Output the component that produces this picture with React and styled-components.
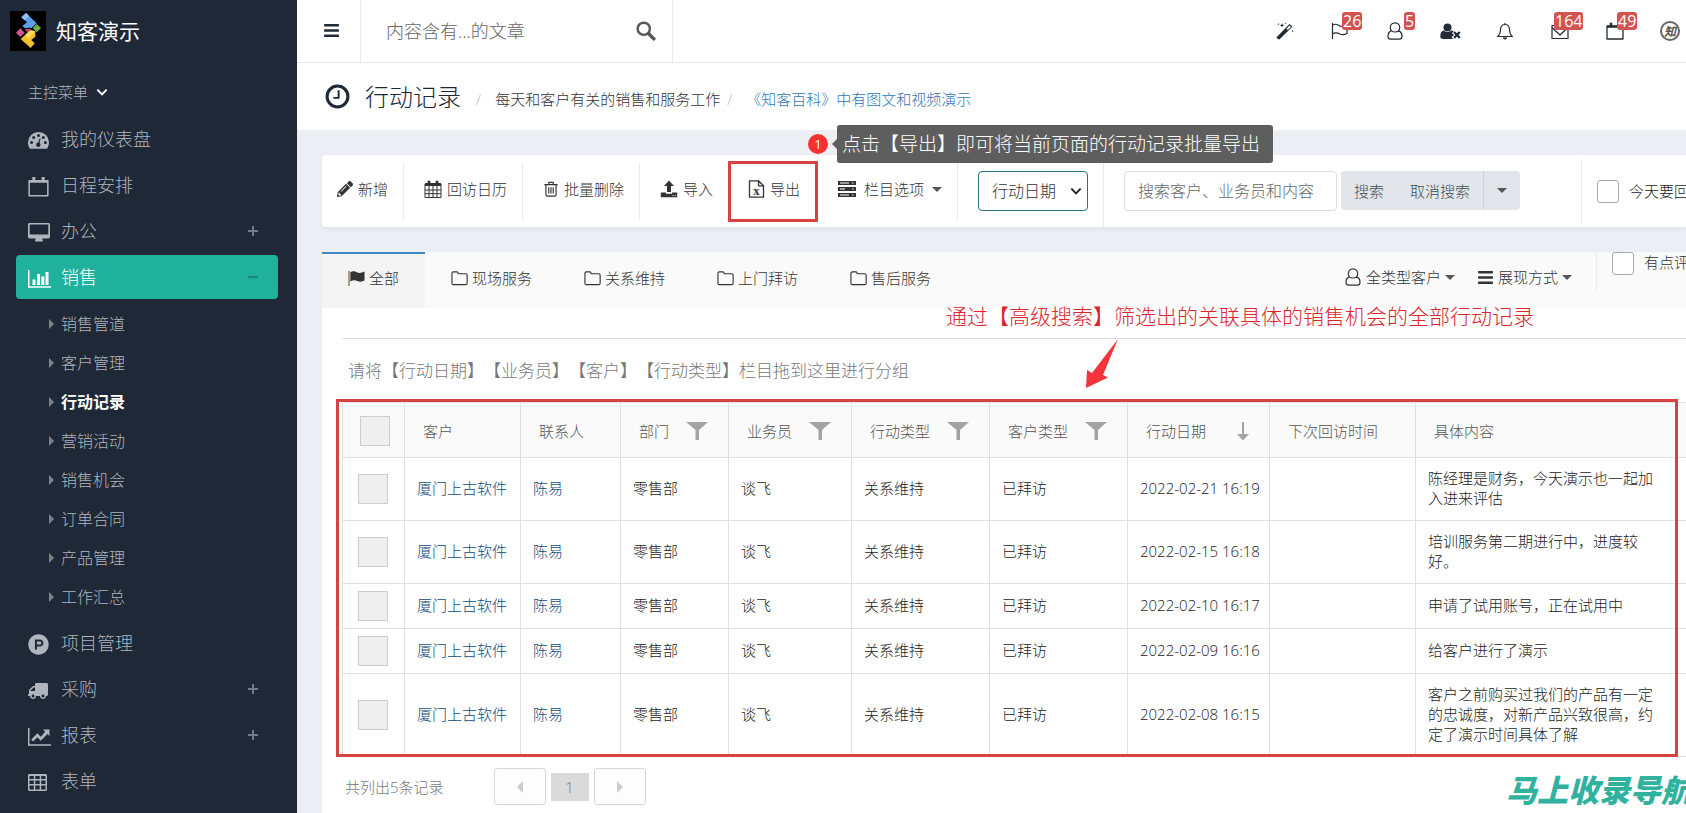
import React, { useState } from 'react';
import styled, { createGlobalStyle, css } from 'styled-components';
import { FaBars, FaPencilAlt, FaProductHunt, FaTruck } from 'react-icons/fa';

const GlobalStyle = createGlobalStyle`
  * {
    box-sizing: border-box;
  }
  body {
    margin: 0;
    background: #ebeef3;
    color: #222;
    font-family: "Open Sans", "Noto Sans CJK SC", sans-serif;
    font-size: 15px;
    font-weight: 300;
    line-height: 20px;
    text-spacing-trim: space-all;
  }
  button, input, select {
    font: inherit;
    color: inherit;
    margin: 0;
  }
  button {
    padding: 0;
    border: none;
    background: none;
    cursor: pointer;
  }
  a {
    color: inherit;
    text-decoration: none;
  }
  svg {
    display: block;
    flex: none;
  }
`;

/* ---------- icons ---------- */

const Line = ({ size = 18, width = 1, children }) => (
  <svg
    width={size}
    height={size}
    viewBox="0 0 18 18"
    fill="none"
    stroke="currentColor"
    strokeWidth={width}
    strokeLinejoin="round"
  >
    {children}
  </svg>
);

const Wand = () => (
  <Line width={0}>
    <path
      fill="currentColor"
      fillRule="evenodd"
      d="M.8 15L13 2.600c.4-.4.800-.4 1.200 0l1.700 1.500c.4.400.4.800 0 1.200L3.600 17.200c-.3.300-.7.300-1 0L.800 16.200c-.3-.4-.3-.8 0-1.200zM10.600 6.700l1.300 1.200 3-3-1.300-1.300z"
    />
    <path
      fill="currentColor"
      d="M6 1l.6 1.700 1.700.6-1.700.6L6 5.600l-.6-1.700-1.700-.6 1.700-.6zM2.500 1l.3.800.8.300-.8.300-.3.800-.3-.8-.8-.3.800-.3zM9.500.5l.3.700.7.300-.7.300-.3.700-.3-.7-.7-.3.700-.3zM16.500 8l.3.800.8.300-.8.300-.3.800-.3-.8-.8-.3.800-.3z"
    />
  </Line>
);

const FlagLine = () => (
  <Line width={1.2}>
    <path d="M1.500 1v16M2 3c3-2 5 0 7 1s4 1 7-.5v8c-3 1.500-5 1.500-7 .5s-4-2-7-.5" />
  </Line>
);

const UserLine = () => (
  <Line width={1.2}>
    <path d="M9 .8c2.900 0 4.700 2 4.700 4.600S11.900 10 9 10 4.300 8 4.300 5.400 6.100.8 9 .8zM5.600 8.600C3 9.600 2 11.500 2 14.200c0 2 1 2.900 2.700 2.900h8.600c1.700 0 2.700-.9 2.700-2.900 0-2.700-1-4.600-3.600-5.600" />
  </Line>
);

const UserTimes = () => (
  <svg width="21" height="17" viewBox="0 0 21 17" fill="currentColor">
    <circle cx="7.500" cy="4.500" r="4" />
    <path d="M3.600 7.600c1 .9 2.300 1.500 3.900 1.500s2.900-.6 3.900-1.500c1 .1 1.700.4 2.300.9l-1.700 1.600 1.900 1.900-2.300 2.300 1.700 1.700H2.800C1.200 16 .3 15.100.3 13.500c0-3 .9-5.500 3.300-5.900z" />
    <path d="M13.300 9.800l1.600-1.600 2 2 2-2 1.700 1.600-2.100 2.100 2.100 2.100-1.700 1.700-2-2.100-2 2.100-1.600-1.700 2-2.100z" />
  </svg>
);

const BellLine = () => (
  <Line width={1.2}>
    <path d="M9 1v1.500M9 2.500c3 0 4.400 2.200 4.500 5 .1 3.500.8 5.500 3 7h-15c2.200-1.500 2.900-3.500 3-7 .1-2.800 1.500-5 4.500-5z" />
    <path d="M7.500 15.500c.3 1.500 2.700 1.500 3 0" strokeWidth="1.600" />
  </Line>
);

const MailLine = () => (
  <Line width={1.2}>
    <path d="M1 3.500h16v13H1zM1 5.500l8 7.500 8-7.500" />
  </Line>
);

const CalendarLine = ({ size }) => (
  <Line size={size} width={1.3}>
    <path d="M1 4h16v13H1z" />
    <path d="M1 4.800h16" strokeWidth="2" />
    <path d="M5 .8v4M13 .8v4" strokeWidth="2.600" />
  </Line>
);

const CalendarGrid = () => (
  <Line width={1}>
    <path d="M1 4h16v13.500H1zM5 6v11M9 6v11M13 6v11M1 10h16M1 13.700h16" />
    <path d="M1 4.500h16" strokeWidth="3" />
    <path d="M5 .8v3.500M13 .8v3.500" strokeWidth="2.800" />
  </Line>
);

const TrashLine = () => (
  <Line width={1.3} size={16}>
    <path d="M1.500 4h15M6.500 4V1.500h5V4M3.300 4v11.500c0 1 .5 1.500 1.500 1.500h8.400c1 0 1.500-.5 1.500-1.500V4M6.500 7v7M9 7v7M11.500 7v7" />
  </Line>
);

const Upload = () => (
  <Line width={0}>
    <path fill="currentColor" d="M9 .5l5 5.500h-3v6H7V6H4zM.8 12.500H6v1.200h6v-1.200h5.200v4.800H.8z" />
    <path fill="#fff" d="M12.500 15h1v1h-1zM14.800 15h1v1h-1z" />
  </Line>
);

const ExcelFile = () => (
  <svg width="17" height="18" viewBox="0 0 17 18">
    <path
      d="M1.500.8h9l5 5v11.400h-14zM10.500.8v5h5"
      fill="none"
      stroke="currentColor"
      strokeWidth="1.300"
      strokeLinejoin="round"
    />
    <text
      x="8.500"
      y="14.500"
      fill="currentColor"
      fontFamily="Liberation Serif, serif"
      fontSize="13"
      fontWeight="700"
      textAnchor="middle"
    >
      x
    </text>
  </svg>
);

const ServerIcon = () => (
  <Line width={0}>
    <path fill="currentColor" d="M0 1h18v4H0zM0 7h18v4H0zM0 13h18v4H0z" />
    <path fill="#fff" d="M2 2.600h9v.8H2zM2 8.600h5v.8H2zM2 14.600h9v.8H2zM14 2.500h1.500v1H14zM14 8.500h1.500v1H14zM14 14.500h1.500v1H14z" />
  </Line>
);

const FolderLine = () => (
  <Line width={1.2} size={17}>
    <path d="M1 3.500C1 2.500 1.500 2 2.500 2h3.700C7.200 2 7.500 2.500 7.600 4h8c1 0 1.500.5 1.500 1.500V14c0 1-.5 1.500-1.500 1.500H2.500C1.500 15.500 1 15 1 14z" />
  </Line>
);

const FlagSolid = () => (
  <Line size={17} width={0}>
    <path fill="#8a7a62" d="M.3 1h1.500v16H.3z" />
    <path fill="currentColor" d="M2.500 2.500c3-2 5-1 7 0s5 .8 8-.8v9.500c-3 1.500-5 1.500-7.500.5s-4.500-1.200-7.500.5z" />
  </Line>
);

const ClockLine = () => (
  <Line size={25} width={2.2}>
    <circle cx="9" cy="9" r="7.500" />
    <path d="M9.800 4.500v5.500H6" strokeWidth="1.400" />
  </Line>
);

const SearchIcon = () => (
  <Line size={20} width={2.2}>
    <circle cx="7" cy="7" r="5.500" />
    <path d="M11 11l6 6" strokeWidth="3" />
  </Line>
);

const ChevronDown = ({ size = 12 }) => (
  <Line size={size} width={3}>
    <path d="M2 5.500l7 7 7-7" strokeLinejoin="miter" />
  </Line>
);

const Dashboard = () => (
  <svg width="21" height="17" viewBox="0 0 21 17">
    <path fill="currentColor" d="M10.500 0A10.500 10.500 0 0 0 0 10.500c0 2.200.6 4 1.700 5.700.2.400.6.600 1 .6h15.600c.4 0 .8-.2 1-.6 1-1.700 1.700-3.500 1.700-5.700A10.500 10.500 0 0 0 10.500 0z" />
    <g fill="#1e2837">
      <circle cx="3.600" cy="10.500" r="1.500" />
      <circle cx="5.700" cy="5.600" r="1.500" />
      <circle cx="10.500" cy="3.400" r="1.500" />
      <circle cx="15.300" cy="5.600" r="1.500" />
      <circle cx="17.400" cy="10.500" r="1.500" />
      <circle cx="10.300" cy="12.800" r="2.200" />
      <path d="M11.500 6.500l1.200.3-1.600 5.500-1.300-.3z" />
    </g>
  </svg>
);

const Desktop = () => (
  <svg width="22" height="19" viewBox="0 0 22 19" fill="currentColor">
    <path
      fillRule="evenodd"
      d="M1.700 0h18.600c1 0 1.700.7 1.700 1.700v12.100c0 1-.7 1.700-1.700 1.700h-6.100c.1 1.100.8 1.600.8 2.200 0 .5-.3.800-.8.800H7.800c-.5 0-.8-.3-.8-.8 0-.6.700-1.100.8-2.200H1.700c-1 0-1.700-.7-1.700-1.700V1.700C0 .7.700 0 1.700 0zm0 1.500v10h18.600v-10z"
    />
  </svg>
);

const BarChart = () => (
  <svg width="23" height="18" viewBox="0 0 23 18" fill="currentColor">
    <path d="M0 0h1.500v16.200H23v1.500H0zM4.500 9.500h3V15h-3zM9 4h3v11H9zM13.300 6.500h3V15h-3zM17.500 2h3v13h-3z" />
  </svg>
);

const LineChart = () => (
  <svg width="23" height="18" viewBox="0 0 23 18" fill="currentColor">
    <path d="M0 0h1.500v16.200H23v1.500H0zM15 1.500h6.500V8l-2-2-6.700 6.700-3.400-3.400-4.200 4.200-2-2L9.400 5.300l3.400 3.400 4.300-4.900z" />
  </svg>
);

const GridIcon = () => (
  <svg width="19" height="17" viewBox="0 0 19 17">
    <path fillRule="evenodd" fill="currentColor" d="M1.500 0h16c.9 0 1.500.6 1.500 1.500v14c0 .9-.6 1.500-1.500 1.500h-16C.6 17 0 16.400 0 15.500v-14C0 .6.600 0 1.500 0zM1.500 2v3h4.300V2zm5.800 0v3h4.400V2zm5.900 0v3h4.300V2zM1.500 6.500v3.500h4.300V6.500zm5.800 0v3.500h4.400V6.500zm5.900 0v3.500h4.300V6.500zM1.500 11.500v4h4.300v-4zm5.800 0v4h4.400v-4zm5.900 0v4h4.300v-4z" />
  </svg>
);

const Funnel = () => (
  <svg width="22" height="18" viewBox="0 0 22 18" fill="#a3a3a3">
    <path d="M0 0h22l-9 8v10h-3.500V8z" />
  </svg>
);

const SortDown = () => (
  <svg width="12" height="19" viewBox="0 0 12 19" fill="#a3a3a3">
    <path d="M5 0h2v12h5l-6 6.500L0 12h5z" />
  </svg>
);

const Logo = () => (
  <svg width="36" height="40" viewBox="0 0 108 120">
    <path fill="#000" d="M0 0h108v120H0z" />
    <path fill="#5b9ee6" d="M34 19L48 6l32 31-15 14-9-1-11 2-8-7 14-11z" />
    <path fill="#8fc0f2" d="M34 19L48 6l10 10-14 12z" />
    <path fill="#6cb33f" d="M80 39l13 12-13 13-12-13z" />
    <path fill="#d2568f" d="M31 52l13 13-13 13-13-13z" />
    <path fill="#b8497c" d="M44 54h20l-10 13z" />
    <path fill="#f3c12c" d="M62 58l14 3v16l-12 10 10 10-12 14-30-27 14-13z" />
    <path fill="#f9dd55" d="M62 58l14 3-22 22-8-12z" />
  </svg>
);

/* ---------- sidebar ---------- */

const Layout = styled.div`
  display: flex;
  min-height: 100vh;
  overflow: hidden;
`;

const Sidebar = styled.aside`
  flex: none;
  width: 297px;
  background: #1e2837;
  color: #b0b5bd;
`;

const Brand = styled.div`
  display: flex;
  align-items: center;
  gap: 10px;
  height: 62px;
  padding-left: 10px;
  color: #fff;
  font-size: 21px;
  font-weight: 400;
`;

const MenuTitle = styled.button`
  display: flex;
  align-items: center;
  gap: 8px;
  height: 55px;
  margin-left: 28px;
  padding-top: 4px;
  color: #b0b5bd;

  svg {
    color: #fff;
  }
`;

const Menu = styled.ul`
  display: flex;
  flex-direction: column;
  gap: 2px;
  margin: 0;
  padding: 0 19px 4px 16px;
  list-style: none;
`;

const MenuLink = styled.a`
  display: grid;
  grid-template-columns: 33px 1fr 10px;
  align-items: center;
  height: 44px;
  padding: 0 20px 0 12px;
  border-radius: 4px;
  font-size: 18px;

  > svg {
    margin-top: 3px;
  }

  ${(p) =>
    p.$open &&
    css`
      background: #1fb19b;
      color: #fff;
    `}
`;

const Toggle = styled.span`
  position: relative;
  height: 10px;
  color: ${(p) => (p.$open ? '#17877b' : '#707985')};

  &::before,
  &::after {
    content: '';
    position: absolute;
    background: currentColor;
  }
  &::before {
    inset: 4px 0;
  }
  &::after {
    inset: 0 4px;
    display: ${(p) => (p.$open ? 'none' : 'block')};
  }
`;

const SubMenu = styled.ul`
  margin: 0;
  padding: 5px 0 3px 33px;
  list-style: none;
`;

const SubLink = styled.a`
  display: flex;
  align-items: center;
  gap: 7px;
  height: 39px;
  font-size: 16px;
  color: ${(p) => (p.$active ? '#fff' : '#b0b5bd')};
  font-weight: ${(p) => (p.$active ? 700 : 300)};

  &::before {
    content: '';
    border: 5px solid transparent;
    border-left-color: #7a828d;
    border-right: none;
  }
`;

const Flip = styled.span`
  display: flex;
  justify-content: flex-end;
  padding-top: 3px;
  transform: scaleX(-1);
`;

/* ---------- header ---------- */

const Main = styled.main`
  flex: 1;
  min-width: 0;
  display: flex;
  flex-direction: column;
`;

const TopBar = styled.header`
  display: flex;
  align-items: stretch;
  height: 63px;
  background: #fff;
  border-bottom: 1px solid #e7e8ec;
`;

const MenuButton = styled.button`
  width: 64px;
  padding: 0 0 1px 26px;
  border-right: 1px solid #e7e8ec;
  color: #222b36;
`;

const GlobalSearch = styled.form`
  display: flex;
  align-items: center;
  width: 312px;
  padding: 0 16px 0 25px;
  border-right: 1px solid #e7e8ec;
  color: #555;

  input {
    flex: 1;
    min-width: 0;
    padding: 0;
    border: none;
    outline: none;
    font-size: 18px;
  }
  input::placeholder {
    color: #666;
  }
`;

const Tools = styled.nav`
  display: flex;
  gap: 1px;
  margin-left: auto;
`;

const Tool = styled.button`
  position: relative;
  display: flex;
  align-items: center;
  justify-content: center;
  width: 54px;
  color: #222b36;
`;

const Badge = styled.span`
  position: absolute;
  top: 12px;
  left: ${(p) => [36, 29, 21][p.$digits - 1]}px;
  padding: 0 1px;
  border-radius: 3px;
  background: #d25352;
  color: #fff;
  font-size: 16px;
  font-weight: 400;
  line-height: 18px;
`;

const Avatar = styled.button`
  align-self: center;
  width: 20px;
  height: 20px;
  margin: 0 6px 0 17px;
  border: 2px solid #666;
  border-radius: 50%;
  color: #555;
  font-size: 12px;
  font-style: italic;
  font-weight: 700;
  line-height: 15px;
  overflow: hidden;
`;

const PageHead = styled.div`
  display: flex;
  align-items: center;
  height: 67px;
  padding: 0 28px;
  background: #fff;
  color: #1e2837;

  h1 {
    margin: 0 15px;
    font-size: 24px;
    font-weight: 300;
  }
`;

const Crumb = styled.span`
  padding-top: 4px;
  color: #333;

  &::before {
    content: '/';
    margin-right: 14px;
    color: #bbb;
  }
  & + & {
    margin-left: 7px;
  }
  a {
    color: #2f74b0;
  }
`;

/* ---------- toolbar ---------- */

const Content = styled.div`
  flex: 1;
  display: flex;
  flex-direction: column;
  gap: 25px;
  padding: 25px 0 0 25px;
`;

const Toolbar = styled.section`
  position: relative;
  display: flex;
  align-items: center;
  height: 72px;
  background: #fff;
  border-radius: 4px 0 0 4px;
  box-shadow: 0 2px 4px rgba(0, 0, 0, 0.05);
  white-space: nowrap;
`;

const Action = styled.button`
  display: flex;
  align-items: center;
  gap: ${(p) => p.$gap || 5}px;
  height: 57px;
  padding: 0 15px 4px 20px;
  border-right: 1px solid #e9eaed;
  color: #333;

  &:first-child {
    padding-left: 15px;
  }
`;

const ImportAction = styled(Action)`
  border-right: none;
`;

const ExportAction = styled(Action)`
  height: 61px;
  padding: 0 15px 4px 17px;
  border: 3px solid #d6423f;
`;

const Caret = styled.span`
  border: 5px solid transparent;
  border-top-color: #555;
  border-bottom: none;
`;

const DateField = styled.div`
  position: relative;
  display: flex;
  align-items: center;
  align-self: stretch;
  padding: 0 15px 0 20px;
  border-right: 1px solid #e9eaed;

  select {
    width: 110px;
    height: 40px;
    padding: 0 13px;
    border: 1px solid #2a7387;
    border-radius: 4px;
    background: #fff;
    color: #333;
    font-size: 16px;
    appearance: none;
  }
  svg {
    position: absolute;
    right: 21px;
    pointer-events: none;
  }
`;

const RecordSearch = styled.form`
  display: flex;
  gap: 4px;
  padding-left: 20px;

  input {
    width: 213px;
    height: 40px;
    padding: 0 13px;
    border: 1px solid #dcdfe3;
    border-radius: 4px;
    font-size: 16px;
  }
  input::placeholder {
    color: #666;
  }
`;

const ButtonGroup = styled.div`
  display: flex;
  height: 39px;
  border-radius: 4px;
  background: #e2e6ea;
  color: #3d4a5a;

  button {
    padding: 0 13px;
  }
  button:last-child {
    border-left: 1px solid #ccd1d6;
  }
`;

const Check = styled.label`
  display: flex;
  align-items: ${(p) => (p.$top ? 'flex-start' : 'center')};
  gap: 10px;
  flex: none;
  width: ${(p) => p.$width}px;
  height: ${(p) => (p.$top ? 38 : 64)}px;
  margin-left: ${(p) => (p.$top ? 0 : 'auto')};
  padding-left: 15px;
  border-left: 1px solid #e9eaed;
  overflow: hidden;
  white-space: nowrap;

  input {
    appearance: none;
    flex: none;
    width: 22px;
    height: 23px;
    border: 1px solid #aaa;
    border-radius: 3px;
    background: #fff;
  }
`;

/* ---------- list ---------- */

const Panel = styled.section`
  position: relative;
  flex: 1;
  background: #fff;
`;

const TabBar = styled.div`
  display: flex;
  height: 56px;
  background: #fafafa;
  color: #333;
`;

const Tab = styled.button`
  display: flex;
  align-items: center;
  gap: 4px;
  padding: 0 26px 6px;
  border-top: 2px solid ${(p) => (p.$active ? '#4088c5' : 'transparent')};
  background: ${(p) => (p.$active ? '#f4f4f4' : 'none')};
`;

const ViewButtons = styled.div`
  display: flex;
  gap: 22px;
  margin-left: auto;
  padding: 0 24px 6px 0;

  button {
    display: flex;
    align-items: center;
    gap: 4px;
  }
`;

const GroupHint = styled.p`
  margin: 30px 0 0 20px;
  padding: 22px 6px 21px;
  border-top: 1px solid #e0e0e0;
  color: #777;
  font-size: 17px;
`;

const TableBox = styled.div`
  position: relative;
  margin-left: 20px;

  &::after {
    content: '';
    position: absolute;
    inset: -3px 8px 0 -6px;
    border: 3px solid #d6423f;
    pointer-events: none;
  }
`;

const Table = styled.table`
  width: 100%;
  table-layout: fixed;
  border-collapse: collapse;
  border-bottom: 1px solid #e0e0e0;

  th,
  td {
    border: 1px solid #e0e0e0;
    border-right: none;
    text-align: left;
    font-weight: 300;
  }
  th {
    height: 55px;
    padding: 2px 0 0 18px;
    background: #fafafa;
    color: #555;
  }
  td {
    padding: 10px 10px 12px 12px;
  }
  th:last-child,
  td:last-child {
    padding: 0;
    border-left-color: transparent;
  }
  th:first-child {
    padding-left: 17px;
  }
  td:first-child {
    padding: 7px 0 7px 15px;
  }
  td a {
    color: #10497a;
  }
`;

const DateCell = styled.td`
  white-space: nowrap;
`;

const HeadCell = styled.div`
  display: flex;
  align-items: center;
  justify-content: space-between;
  padding-right: 20px;
`;

const RowCheck = styled.input`
  display: block;
  appearance: none;
  width: 30px;
  height: 30px;
  border: 1px solid #ccc;
  background: #efefef;
`;

const Pager = styled.div`
  display: flex;
  align-items: center;
  gap: 5px;
  padding: 11px 23px 7px;
  color: #777;

  p {
    margin: 0 45px 0 0;
  }
`;

const PageArrow = styled.button`
  display: flex;
  align-items: center;
  justify-content: center;
  width: 52px;
  height: 37px;
  border: 1px solid #d5d5d5;
  border-radius: 3px;
  background: #fdfdfd;

  &::before {
    content: '';
    border: 6px solid transparent;
    border-${(p) => (p.$prev ? 'right' : 'left')}-color: #ccc;
    border-${(p) => (p.$prev ? 'left' : 'right')}: none;
  }
`;

const PageNumber = styled.button`
  width: 38px;
  height: 28px;
  background: #dadada;
  color: #777;
`;

/* ---------- annotations ---------- */

const ExportTip = styled.div`
  position: absolute;
  top: -30px;
  left: 486px;
  display: flex;
  align-items: center;
  color: #fff;
`;

const TipNumber = styled.span`
  width: 20px;
  height: 20px;
  margin-right: 9px;
  border-radius: 50%;
  background: #f7312f;
  font-size: 13px;
  font-weight: 400;
  line-height: 20px;
  text-align: center;
`;

const TipText = styled.span`
  padding: 0 13px 0 5px;
  border-radius: 3px;
  background: #5e5e5e;
  font-size: 19px;
  line-height: 38px;

  &::before {
    content: '';
    position: absolute;
    top: 14px;
    left: 24px;
    border: 5px solid transparent;
    border-right-color: #5e5e5e;
    border-left: none;
  }
`;

const ListNote = styled.div`
  position: absolute;
  top: 54px;
  left: 624px;
  color: #d9252d;
  font-size: 21px;
  white-space: nowrap;

  svg {
    margin: 13px 0 0 140px;
  }
`;

const Watermark = styled.div`
  position: absolute;
  right: -6px;
  bottom: 8px;
  color: #30b29f;
  font-size: 31px;
  font-style: italic;
  font-weight: 900;
  line-height: 30px;
  white-space: nowrap;
`;

/* ---------- data ---------- */

const menu = [
  { label: '我的仪表盘', icon: <Dashboard /> },
  { label: '日程安排', icon: <CalendarLine size={21} /> },
  { label: '办公', icon: <Desktop />, more: true },
  {
    label: '销售',
    icon: <BarChart />,
    more: true,
    children: ['销售管道', '客户管理', '行动记录', '营销活动', '销售机会', '订单合同', '产品管理', '工作汇总'],
  },
  { label: '项目管理', icon: <FaProductHunt size={21} /> },
  {
    label: '采购',
    icon: (
      <Flip>
        <FaTruck size={20} />
      </Flip>
    ),
    more: true,
  },
  { label: '报表', icon: <LineChart />, more: true },
  { label: '表单', icon: <GridIcon /> },
];

const tools = [
  { label: '快捷', icon: <Wand /> },
  { label: '跟进', icon: <FlagLine />, count: '26' },
  { label: '客户', icon: <UserLine />, count: '5' },
  { label: '流失客户', icon: <UserTimes /> },
  { label: '提醒', icon: <BellLine /> },
  { label: '消息', icon: <MailLine />, count: '164' },
  { label: '日程', icon: <CalendarLine />, count: '49' },
];

const tabs = ['全部', '现场服务', '关系维持', '上门拜访', '售后服务'];

const columns = [
  { label: '客户', width: 116 },
  { label: '联系人', width: 100 },
  { label: '部门', width: 108, icon: <Funnel /> },
  { label: '业务员', width: 123, icon: <Funnel /> },
  { label: '行动类型', width: 138, icon: <Funnel /> },
  { label: '客户类型', width: 138, icon: <Funnel /> },
  { label: '行动日期', width: 142, icon: <SortDown /> },
  { label: '下次回访时间', width: 146 },
  { label: '具体内容' },
];

const records = [
  { date: '2022-02-21 16:19', text: '陈经理是财务，今天演示也一起加入进来评估' },
  { date: '2022-02-15 16:18', text: '培训服务第二期进行中，进度较好。' },
  { date: '2022-02-10 16:17', text: '申请了试用账号，正在试用中' },
  { date: '2022-02-09 16:16', text: '给客户进行了演示' },
  {
    date: '2022-02-08 16:15',
    text: '客户之前购买过我们的产品有一定的忠诚度，对新产品兴致很高，约定了演示时间具体了解',
  },
];

const SideNav = () => (
  <Sidebar>
    <Brand>
      <Logo />
      知客演示
    </Brand>
    <MenuTitle>
      主控菜单 <ChevronDown />
    </MenuTitle>
    <Menu>
      {menu.map((item) => (
        <li key={item.label}>
          <MenuLink href="#" $open={!!item.children}>
            {item.icon}
            <span>{item.label}</span>
            {item.more && <Toggle $open={!!item.children} />}
          </MenuLink>
          {item.children && (
            <SubMenu>
              {item.children.map((child) => (
                <li key={child}>
                  <SubLink href="#" $active={child === '行动记录'}>
                    {child}
                  </SubLink>
                </li>
              ))}
            </SubMenu>
          )}
        </li>
      ))}
    </Menu>
  </Sidebar>
);

const RecordTable = () => (
  <TableBox>
    <Table>
      <colgroup>
        <col width="62" />
        {columns.map((col) => (
          <col key={col.label} width={col.width} />
        ))}
        <col width="12" />
      </colgroup>
      <thead>
        <tr>
          <th>
            <RowCheck type="checkbox" aria-label="全选" />
          </th>
          {columns.map((col) => (
            <th key={col.label}>
              <HeadCell>
                {col.label}
                {col.icon}
              </HeadCell>
            </th>
          ))}
          <th />
        </tr>
      </thead>
      <tbody>
        {records.map((record) => (
          <tr key={record.date}>
            <td>
              <RowCheck type="checkbox" aria-label={record.date} />
            </td>
            <td>
              <a href="#">厦门上古软件</a>
            </td>
            <td>
              <a href="#">陈易</a>
            </td>
            <td>零售部</td>
            <td>谈飞</td>
            <td>关系维持</td>
            <td>已拜访</td>
            <DateCell>{record.date}</DateCell>
            <td />
            <td>{record.text}</td>
            <td />
          </tr>
        ))}
      </tbody>
    </Table>
  </TableBox>
);

const App = () => {
  const [tab, setTab] = useState('全部');

  return (
    <Layout>
      <GlobalStyle />
      <SideNav />
      <Main>
        <TopBar>
          <MenuButton aria-label="菜单">
            <FaBars size={17} />
          </MenuButton>
          <GlobalSearch onSubmit={(e) => e.preventDefault()}>
            <input aria-label="搜索文章" placeholder="内容含有...的文章" />
            <button aria-label="搜索">
              <SearchIcon />
            </button>
          </GlobalSearch>
          <Tools>
            {tools.map((tool) => (
              <Tool key={tool.label} aria-label={tool.label}>
                {tool.icon}
                {tool.count && <Badge $digits={tool.count.length}>{tool.count}</Badge>}
              </Tool>
            ))}
            <Avatar>知</Avatar>
          </Tools>
        </TopBar>

        <PageHead>
          <ClockLine />
          <h1>行动记录</h1>
          <Crumb>每天和客户有关的销售和服务工作</Crumb>
          <Crumb>
            <a href="#">《知客百科》中有图文和视频演示</a>
          </Crumb>
        </PageHead>

        <Content>
          <Toolbar>
            <Action>
              <FaPencilAlt size={16} /> 新增
            </Action>
            <Action>
              <CalendarGrid /> 回访日历
            </Action>
            <Action>
              <TrashLine /> 批量删除
            </Action>
            <ImportAction>
              <Upload /> 导入
            </ImportAction>
            <ExportAction>
              <ExcelFile /> 导出
            </ExportAction>
            <Action $gap={8}>
              <ServerIcon /> 栏目选项 <Caret />
            </Action>
            <DateField>
              <select aria-label="日期类型">
                <option>行动日期</option>
              </select>
              <ChevronDown />
            </DateField>
            <RecordSearch onSubmit={(e) => e.preventDefault()}>
              <input aria-label="搜索记录" placeholder="搜索客户、业务员和内容" />
              <ButtonGroup>
                <button>搜索</button>
                <button type="button">取消搜索</button>
                <button type="button" aria-label="更多">
                  <Caret as="div" />
                </button>
              </ButtonGroup>
            </RecordSearch>
            <Check $width={105}>
              <input type="checkbox" />
              今天要回访
            </Check>
            <ExportTip>
              <TipNumber>1</TipNumber>
              <TipText>点击【导出】即可将当前页面的行动记录批量导出</TipText>
            </ExportTip>
          </Toolbar>

          <Panel>
            <TabBar>
              {tabs.map((name) => (
                <Tab key={name} $active={name === tab} onClick={() => setTab(name)}>
                  {name === '全部' ? <FlagSolid /> : <FolderLine />}
                  {name}
                </Tab>
              ))}
              <ViewButtons>
                <button>
                  <UserLine /> 全类型客户 <Caret />
                </button>
                <button>
                  <FaBars size={17} /> 展现方式 <Caret />
                </button>
              </ViewButtons>
              <Check $width={90} $top>
                <input type="checkbox" />
                有点评
              </Check>
            </TabBar>
            <GroupHint>请将【行动日期】【业务员】【客户】【行动类型】栏目拖到这里进行分组</GroupHint>
            <RecordTable />
            <Pager>
              <p>共列出5条记录</p>
              <PageArrow $prev aria-label="上一页" />
              <PageNumber>1</PageNumber>
              <PageArrow aria-label="下一页" />
            </Pager>
            <ListNote>
              通过【高级搜索】筛选出的关联具体的销售机会的全部行动记录
              <svg width="34" height="50" viewBox="0 0 34 50" fill="#f4333a">
                <path d="M32 0L17 36l5 2.500L0 49l1-18 5 3z" />
              </svg>
            </ListNote>
            <Watermark>马上收录导航</Watermark>
          </Panel>
        </Content>
      </Main>
    </Layout>
  );
};

export default App;
